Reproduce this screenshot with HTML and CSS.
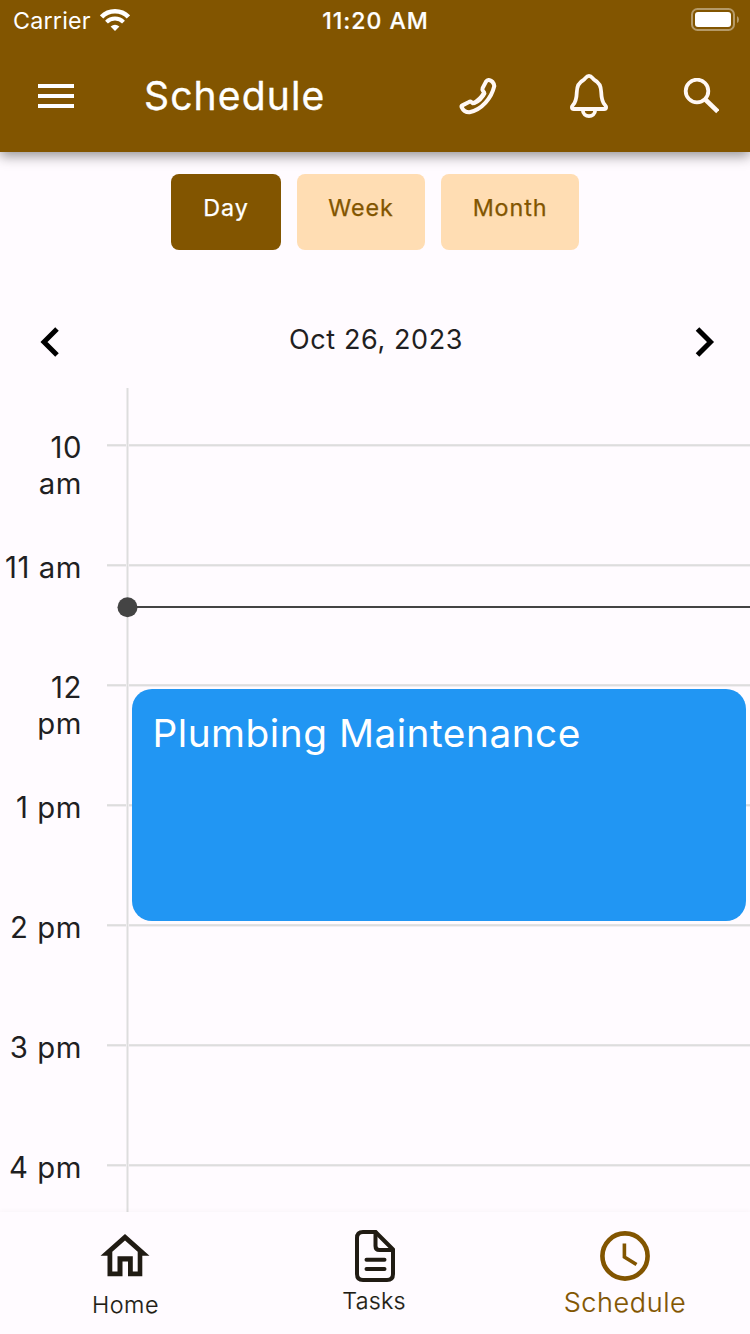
FILE: index.html
```html
<!DOCTYPE html>
<html lang="en">
<head>
<meta charset="utf-8">
<title>Schedule</title>
<link rel="stylesheet" href="styles.css">
</head>
<body>
<div class="app">
  <header class="header">
    <div class="status">
      <div class="status-left">
        <span class="carrier">Carrier</span>
        <svg class="wifi" width="30" height="22" viewBox="0 0 30 22" fill="none" stroke="#fff">
          <path d="M1.6 8A18.6 18.6 0 0 1 28.4 8" stroke-width="4.6"/>
          <path d="M6.5 13.1A12 12 0 0 1 23.500 13.1" stroke-width="4"/>
          <path d="M15 22L10.6 17.6Q15 13.8 19.4 17.6Z" fill="#fff" stroke="none"/>
        </svg>
      </div>
      <span class="clock">11:20 AM</span>
      <svg class="battery" width="49" height="24" viewBox="0 0 49 24">
        <rect x="1" y="1" width="42" height="21" rx="5.5" fill="none" stroke="#b59a68" stroke-width="2"/>
        <rect x="4" y="4" width="36" height="15" rx="3" fill="#fff"/>
        <path d="M46 8Q48 9 48 11.500T46 15Z" fill="#b59a68"/>
      </svg>
    </div>
    <div class="toolbar">
      <svg class="menu" width="36" height="24" viewBox="0 0 36 24" fill="#fff"><path d="M0 0h36v4H0zM0 10h36v4H0zM0 20h36v4H0z"/></svg>
      <h1 class="title">Schedule</h1>
      <div class="actions">
        <svg width="40" height="40" viewBox="0 0 40 40" fill="none" stroke="#fff8f4" stroke-width="4" stroke-linejoin="round">
          <path d="M32 4Q36.500 5 37.300 10C34.500 22 25 33.500 12.500 36.300Q7 36.500 4.600 31.200Q4.200 30 5.400 29.400L12 26Q13.300 25.200 14.500 26.200L16 27.300Q23 24 27.200 16.500L26 15Q25 13.700 25.600 12.200L29 5.600Q30.300 3.500 32 4Z"/>
          <path d="M17 28.500Q25 25 28.800 17" stroke-width="1.900"/>
        </svg>
        <svg width="40" height="46" viewBox="0 0 40 46" fill="none" stroke="#fff8f4" stroke-width="3.800" stroke-linejoin="round">
          <path d="M20 2.900C17 2.900 16.500 6 14.500 7C9.500 9.500 8 13 7.800 19C7.600 25 6.500 29.500 4 32C2.300 33.800 2.500 36 4.800 36H35.200C37.500 36 37.700 33.800 36 32C33.500 29.500 32.400 25 32.200 19C32 13 30.500 9.500 25.500 7C23.500 6 23 2.900 20 2.900Z"/>
          <path d="M13.800 37C14 45.200 26 45.200 26.200 37"/>
        </svg>
        <svg width="36" height="36" viewBox="0 0 36 36" fill="none" stroke="#fff8f4">
          <circle cx="14" cy="13" r="11.300" stroke-width="3.800"/>
          <path d="M22.300 21.500L34.800 33.500" stroke-width="4.600"/>
        </svg>
      </div>
    </div>
  </header>

  <main class="main">
    <div class="tabs">
      <button class="tab tab-day">Day</button>
      <button class="tab tab-week">Week</button>
      <button class="tab tab-month">Month</button>
    </div>
    <div class="datebar">
      <svg width="20" height="30" viewBox="0 0 20 30" fill="none" stroke="#000" stroke-width="5"><path d="M18 2L5 15L18 28"/></svg>
      <span class="date">Oct 26, 2023</span>
      <svg width="20" height="30" viewBox="0 0 20 30" fill="none" stroke="#000" stroke-width="5"><path d="M2.500 2L15.500 15L2.500 28"/></svg>
    </div>
    <section class="timeline">
      <div class="axis"></div>
      <div class="hour"><span class="label">10<br>am</span><i class="rule"></i></div>
      <div class="hour"><span class="label">11 am</span><i class="rule"></i></div>
      <div class="hour"><span class="label">12<br>pm</span><i class="rule"></i></div>
      <div class="hour"><span class="label">1 pm</span><i class="rule"></i></div>
      <div class="hour"><span class="label">2 pm</span><i class="rule"></i></div>
      <div class="hour"><span class="label">3 pm</span><i class="rule"></i></div>
      <div class="hour"><span class="label">4 pm</span><i class="rule"></i></div>
      <div class="now"></div>
      <svg class="now-dot" width="22" height="22" viewBox="0 0 22 22"><circle cx="10.500" cy="11.200" r="10" fill="#444"/></svg>
      <article class="event">Plumbing Maintenance</article>
    </section>
  </main>

  <nav class="nav">
    <a class="nav-item nav-home">
      <svg width="50" height="44" viewBox="0 0 50 44" fill="#201b13" fill-rule="evenodd"><path d="M25 0L49.500 21.700H42.300V42.300H28V27.500H22.500V42.300H7.500V21.700H.5ZM25 6.500L12.300 17.700V37.500H17.500V22.300H32.800V37.500H37.700V17.700Z"/></svg>
      <span>Home</span>
    </a>
    <a class="nav-item nav-tasks">
      <svg width="40" height="52" viewBox="0 0 40 52" fill="none" stroke="#201b13" stroke-width="4" stroke-linejoin="round" stroke-linecap="round">
        <path d="M20.500 2H8Q2 2 2 8V44Q2 50 8 50H32Q38 50 38 44V19.500Z"/>
        <path d="M20.500 2V16Q20.500 20 24.500 20H38"/>
        <path d="M11.500 29.700H29.500M11.500 39H29.500"/>
      </svg>
      <span>Tasks</span>
    </a>
    <a class="nav-item nav-schedule">
      <svg width="50" height="50" viewBox="0 0 50 50" fill="none" stroke="#825500">
        <circle cx="25" cy="25" r="22.600" stroke-width="4.600"/>
        <path d="M24.400 12.500V26L36.500 33.500" stroke-width="3.600"/>
      </svg>
      <span>Schedule</span>
    </a>
  </nav>
</div>
</body>
</html>
```

FILE: styles.css
```css
* { box-sizing: border-box; }
body { margin: 0; background: #fffbff; font-family: Inter, "Liberation Sans", sans-serif; font-weight: 400; color: #1f1f22; }
.app { width: 750px; height: 1334px; display: flex; flex-direction: column; overflow: hidden; }
svg { display: block; flex: none; }

.header { height: 152px; flex: none; background: #825500; color: #fff; box-shadow: 0 4px 12px rgba(0, 0, 0, .42); position: relative; z-index: 1; }
.status { height: 40px; display: grid; grid-template-columns: 1fr auto 1fr; align-items: center; padding: 0 10px 0 13px; font-size: 23.300px; }
.status-left { display: flex; align-items: center; gap: 9px; }
.carrier { letter-spacing: .2px; }
.clock { font-weight: 500; font-size: 23px; letter-spacing: 1px; padding-top: 2px; margin-right: 2px; -webkit-text-stroke: .2px #fff; }
.battery { justify-self: end; }
.toolbar { height: 112px; display: flex; align-items: center; padding: 0 31px 0 38px; }
.title { margin: 0 0 0 70px; font-size: 39px; font-weight: 400; letter-spacing: 1.150px; line-height: 48px; -webkit-text-stroke: .35px #fff; }
.actions { margin-left: auto; display: flex; align-items: center; gap: 72px; }
.actions svg:last-child { margin-left: 2px; }

.main { flex: 1; min-height: 0; display: flex; flex-direction: column; }
.tabs { display: flex; justify-content: center; gap: 16px; padding-top: 22px; }
.tab { height: 76px; border: 0; border-radius: 8px; padding: 0 0 8px; font: 400 23.300px/28px Inter, "Liberation Sans", sans-serif; letter-spacing: .9px; background: #ffddb3; color: #825500; -webkit-text-stroke: .25px currentColor; }
.tab-day { width: 110px; background: #825500; color: #fff; }
.tab-week { width: 128px; }
.tab-month { width: 138px; }
.datebar { height: 138px; display: flex; justify-content: space-between; align-items: center; padding: 46px 35px 0 39px; }
.date { font-size: 27px; letter-spacing: .6px; line-height: 36px; padding: 0 2px 5px 0; }

.timeline { flex: 1; min-height: 0; position: relative; overflow: hidden; padding-top: 42px; }
.axis { position: absolute; left: 126px; top: 0; bottom: 0; width: 3px; background: linear-gradient(90deg, #eeecee 0 1px, #dddddd 1px 2px, #eeecee 2px); }
.hour { height: 120px; display: grid; grid-template-columns: 82px 1fr; column-gap: 25px; }
.label { text-align: right; font-size: 29.300px; line-height: 36px; letter-spacing: .55px; white-space: nowrap; }
.rule { height: 3px; margin-top: 14px; background: linear-gradient(#e3e2e3 0 1px, #dddddd 1px 2px, #f1eef1 2px); }
.now { position: absolute; left: 127px; right: 0; top: 218px; height: 2px; background: #444; }
.now-dot { position: absolute; left: 117px; top: 208px; }
.event { position: absolute; left: 131.500px; right: 4px; top: 301px; height: 232px; border-radius: 20px; background: #2196f3; color: #fff; padding: 20px 21px; font-size: 38.800px; line-height: 48px; letter-spacing: .5px; white-space: nowrap; }

.nav { height: 122px; flex: none; display: grid; grid-template-columns: repeat(3, 1fr); background: #fffbff; box-shadow: 0 -1px 5px rgba(80, 50, 60, .035); position: relative; color: #201b13; font-size: 23.300px; letter-spacing: .5px; line-height: 28px; font-weight: 300; -webkit-text-stroke: .2px currentColor; }
.nav-item { display: flex; flex-direction: column; align-items: center; }
.nav-home { padding-top: 22px; gap: 13px; }
.nav-home span { padding-left: 1px; }
.nav-tasks { padding-top: 18px; gap: 5px; }
.nav-tasks span { letter-spacing: .2px; padding-right: 2px; }
.nav-schedule { padding-top: 19px; gap: 8px; color: #825500; font-size: 27px; letter-spacing: .6px; }
```
